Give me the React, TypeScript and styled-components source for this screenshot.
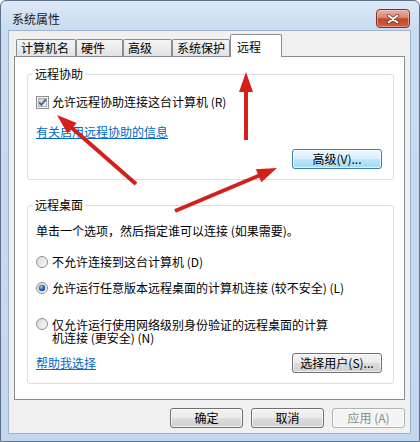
import React from 'react';
import styled, { createGlobalStyle } from 'styled-components';

const GlobalStyle = createGlobalStyle`
  html, body {
    margin: 0;
    padding: 0;
  }
  body {
    font-family: "Noto Sans CJK SC", "Liberation Sans", sans-serif;
    font-size: 12px;
    color: #000;
    background: #fff;
  }
`;

const Page = styled.div`
  position: relative;
  width: 420px;
  height: 442px;
`;

const Window = styled.div`
  box-sizing: border-box;
  width: 420px;
  height: 442px;
  border: 1px solid #5d7087;
  border-radius: 6px 6px 0 0;
  background: linear-gradient(to bottom, #dde9f6 0, #c9dcf0 28px, #c3d7ee 100%);
  padding: 0 8px 7px 7px;
  display: flex;
  flex-direction: column;
  overflow: hidden;
`;

const TitleBar = styled.div`
  height: 29px;
  display: flex;
  justify-content: space-between;
  align-items: flex-start;
`;

const Title = styled.div`
  margin: 10px 0 0 4px;
  line-height: 16px;
  color: #1b1b1b;
`;

const CloseBtn = styled.div`
  box-sizing: border-box;
  width: 34px;
  height: 19px;
  margin: 8px 1px 0 0;
  border: 1px solid #7a3327;
  border-radius: 4px;
  background: linear-gradient(to bottom, #eab1a3 0%, #d8846f 45%, #c3462c 52%, #d0603f 100%);
  box-shadow: inset 0 0 0 1px rgba(255, 220, 210, 0.45);
  display: flex;
  align-items: center;
  justify-content: center;
`;

const Client = styled.div`
  flex: 1;
  border: 1px solid #9fb4cc;
  background: #f0f0f0;
  display: flex;
  flex-direction: column;
`;

const TabStrip = styled.div`
  height: 25px;
  padding-left: 7px;
  display: flex;
  align-items: flex-end;
`;

const Tab = styled.div<{ $w: number; $active?: boolean }>`
  box-sizing: border-box;
  width: ${p => p.$w}px;
  height: ${p => (p.$active ? 23 : 17)}px;
  margin-bottom: ${p => (p.$active ? -1 : 0)}px;
  border: 1px solid #898c95;
  border-bottom: none;
  border-radius: 2px 2px 0 0;
  background: ${p => (p.$active ? '#fff' : 'linear-gradient(to bottom, #f5f5f5, #e2e2e2)')};
  padding: ${p => (p.$active ? '4px 0 0 6px' : '0 0 0 4px')};
  line-height: 16px;
  white-space: nowrap;
  position: relative;
  z-index: ${p => (p.$active ? 1 : 0)};
`;

const Panel = styled.div`
  box-sizing: border-box;
  height: 344px;
  margin: 0 5px;
  border: 1px solid #898c95;
  background: #fff;
  padding: 10px 10px 0 12px;
`;

const Group = styled.fieldset<{ $pt: number; $mt?: number }>`
  margin: ${p => p.$mt ?? 0}px 0 0 0;
  padding: ${p => p.$pt}px 11px 10px 8px;
  border: 1px solid #d5dfe5;
  border-radius: 3px;
  min-width: 0;
  display: flex;
  flex-direction: column;
`;

const Legend = styled.legend`
  margin-left: -3px;
  padding: 0 2px;
  line-height: 14px;
`;

const Row = styled.div<{ $mt?: number; $gap?: number }>`
  display: flex;
  align-items: center;
  height: 16px;
  line-height: 16px;
  gap: ${p => p.$gap ?? 0}px;
  margin-top: ${p => p.$mt ?? 0}px;
  white-space: nowrap;
`;

const WrapRow = styled.div<{ $mt?: number }>`
  display: flex;
  align-items: flex-start;
  gap: 4px;
  margin-top: ${p => p.$mt ?? 0}px;
`;

const WrapText = styled.div`
  width: 282px;
  line-height: 13px;
`;

const Link = styled.a<{ $mt?: number }>`
  display: block;
  margin-top: ${p => p.$mt ?? 0}px;
  line-height: 16px;
  color: #0066cc;
  text-decoration: underline;
  cursor: pointer;
`;

const ButtonRow = styled.div<{ $mt?: number; $between?: boolean }>`
  display: flex;
  align-items: center;
  justify-content: ${p => (p.$between ? 'space-between' : 'flex-end')};
  margin-top: ${p => p.$mt ?? 0}px;
`;

const Button = styled.button<{ $w: number; $kind?: 'hot' | 'disabled' }>`
  box-sizing: border-box;
  width: ${p => p.$w}px;
  height: 20px;
  padding: 0;
  font: inherit;
  line-height: 18px;
  border-radius: 3px;
  color: ${p => (p.$kind === 'disabled' ? '#8b8b8b' : '#000')};
  border: 1px solid
    ${p => (p.$kind === 'hot' ? '#3c7fb1' : p.$kind === 'disabled' ? '#adb2b5' : '#707070')};
  background: ${p =>
    p.$kind === 'hot'
      ? 'linear-gradient(to bottom, #eaf6fd 0%, #d9f0fc 50%, #bee6fd 50%, #a7d9f5 100%)'
      : p.$kind === 'disabled'
      ? '#f4f4f4'
      : 'linear-gradient(to bottom, #f2f2f2 0%, #ebebeb 50%, #dddddd 50%, #cfcfcf 100%)'};
  box-shadow: inset 0 0 0 1px rgba(255, 255, 255, 0.7);
`;

const Footer = styled.div`
  display: flex;
  justify-content: flex-end;
  gap: 8px;
  margin-top: 8px;
  padding-right: 5px;
`;

const Overlay = styled.svg`
  position: absolute;
  left: 0;
  top: 0;
  pointer-events: none;
`;

const CloseIcon = () => (
  <svg width="14" height="10" viewBox="0 0 14 10">
    <path d="M2.5 1.5 L11.5 8.5 M11.5 1.5 L2.5 8.5" stroke="#6b2a20" strokeWidth="3.4" strokeLinecap="round" />
    <path d="M2.5 1.5 L11.5 8.5 M11.5 1.5 L2.5 8.5" stroke="#fff" strokeWidth="2" strokeLinecap="round" />
  </svg>
);

const CheckBox = () => (
  <svg width="13" height="13" viewBox="0 0 13 13">
    <defs>
      <linearGradient id="cbg" x1="0" y1="0" x2="1" y2="1">
        <stop offset="0" stopColor="#c9ced6" />
        <stop offset="1" stopColor="#f6f7f8" />
      </linearGradient>
    </defs>
    <rect x="0.5" y="0.5" width="12" height="12" fill="#f6f6f6" stroke="#8e8f8f" />
    <rect x="2.5" y="2.5" width="8" height="8" fill="url(#cbg)" stroke="#a9afb7" />
    <path d="M3.2 6.4 L5.4 8.8 L9.9 3.4" fill="none" stroke="#4a5e8b" strokeWidth="1.8" />
  </svg>
);

const Radio = ({ on }: { on?: boolean }) => (
  <svg width="12" height="12" viewBox="0 0 12 12" style={{ flex: 'none' }}>
    <defs>
      <linearGradient id="rbg" x1="0" y1="0" x2="1" y2="1">
        <stop offset="0" stopColor="#d4d7db" />
        <stop offset="1" stopColor="#fbfbfb" />
      </linearGradient>
      <radialGradient id="rdot" cx="0.4" cy="0.35" r="0.7">
        <stop offset="0" stopColor="#9ed3f7" />
        <stop offset="0.5" stopColor="#2d72c2" />
        <stop offset="1" stopColor="#133e85" />
      </radialGradient>
    </defs>
    <circle cx="6" cy="6" r="5.5" fill="url(#rbg)" stroke="#8e8f8f" />
    {on && <circle cx="6" cy="6" r="3.2" fill="url(#rdot)" />}
  </svg>
);

const head = (x1: number, y1: number, x2: number, y2: number, len: number, half: number) => {
  const d = Math.hypot(x2 - x1, y2 - y1);
  const ux = (x2 - x1) / d;
  const uy = (y2 - y1) / d;
  const bx = x2 - ux * len;
  const by = y2 - uy * len;
  return {
    base: [bx + ux * 2, by + uy * 2],
    pts: `${x2},${y2} ${bx - uy * half},${by + ux * half} ${bx + uy * half},${by - ux * half}`,
  };
};

const arrows = [
  { from: [246, 140], to: [246, 72] },
  { from: [136, 184], to: [57, 115] },
  { from: [175, 211], to: [277, 168] },
];

const tabs = [
  { label: '计算机名', w: 60 },
  { label: '硬件', w: 47 },
  { label: '高级', w: 49 },
  { label: '系统保护', w: 58 },
  { label: '远程', w: 52, active: true },
];

const App = () => {
  return (
    <Page>
      <GlobalStyle />
      <Window>
        <TitleBar>
          <Title>系统属性</Title>
          <CloseBtn>
            <CloseIcon />
          </CloseBtn>
        </TitleBar>
        <Client>
          <TabStrip>
            {tabs.map(t => (
              <Tab key={t.label} $w={t.w} $active={t.active}>
                {t.label}
              </Tab>
            ))}
          </TabStrip>
          <Panel>
            <Group $pt={13}>
              <Legend>远程协助</Legend>
              <Row $gap={3}>
                <CheckBox />
                <span>允许远程协助连接这台计算机 (R)</span>
              </Row>
              <Link $mt={14}>有关启用远程协助的信息</Link>
              <ButtonRow $mt={9}>
                <Button $w={90} $kind="hot">高级(V)...</Button>
              </ButtonRow>
            </Group>
            <Group $pt={11} $mt={18}>
              <Legend>远程桌面</Legend>
              <Row>单击一个选项，然后指定谁可以连接 (如果需要)。</Row>
              <Row $mt={15} $gap={4}>
                <Radio />
                <span>不允许连接到这台计算机 (D)</span>
              </Row>
              <Row $mt={10} $gap={4}>
                <Radio on />
                <span>允许运行任意版本远程桌面的计算机连接 (较不安全) (L)</span>
              </Row>
              <WrapRow $mt={22}>
                <Radio />
                <WrapText>仅允许运行使用网络级别身份验证的远程桌面的计算机连接 (更安全) (N)</WrapText>
              </WrapRow>
              <ButtonRow $mt={9} $between>
                <Link>帮助我选择</Link>
                <Button $w={90}>选择用户(S)...</Button>
              </ButtonRow>
            </Group>
          </Panel>
          <Footer>
            <Button $w={73}>确定</Button>
            <Button $w={73}>取消</Button>
            <Button $w={73} $kind="disabled">应用 (A)</Button>
          </Footer>
        </Client>
      </Window>
      <Overlay width="420" height="442" viewBox="0 0 420 442">
        {arrows.map((a, i) => {
          const h = head(a.from[0], a.from[1], a.to[0], a.to[1], 20, 7);
          return (
            <g key={i}>
              <line
                x1={a.from[0]}
                y1={a.from[1]}
                x2={h.base[0]}
                y2={h.base[1]}
                stroke="#d41f1a"
                strokeWidth="4"
              />
              <polygon points={h.pts} fill="#d41f1a" />
            </g>
          );
        })}
      </Overlay>
    </Page>
  );
};

export default App;
